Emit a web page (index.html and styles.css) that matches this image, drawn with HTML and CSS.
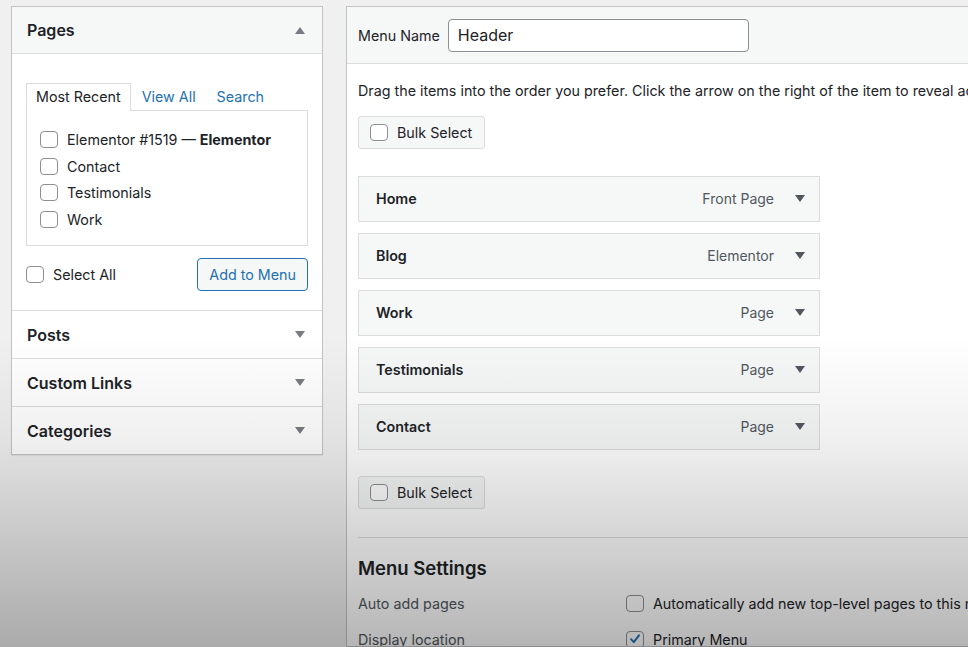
FILE: index.html
```html
<!DOCTYPE html>
<html>
<head>
<meta charset="utf-8">
<link rel="stylesheet" href="styles.css">
</head>
<body>
<div class="page">
  <div class="side">
    <div class="acc open">
      <div class="acc-head"><span>Pages</span><span class="tri up"></span></div>
      <div class="acc-body">
        <div class="tabs">
          <span class="tab active">Most Recent</span>
          <span class="tab link">View All</span>
          <span class="tab link">Search</span>
        </div>
        <div class="tab-panel">
          <label class="chk"><span class="box"></span><span>Elementor #1519 — <b>Elementor</b></span></label>
          <label class="chk"><span class="box"></span><span>Contact</span></label>
          <label class="chk"><span class="box"></span><span>Testimonials</span></label>
          <label class="chk"><span class="box"></span><span>Work</span></label>
        </div>
        <div class="acc-actions">
          <label class="chk"><span class="box"></span><span>Select All</span></label>
          <button class="btn-secondary">Add to Menu</button>
        </div>
      </div>
    </div>
    <div class="acc"><div class="acc-head"><span>Posts</span><span class="tri"></span></div></div>
    <div class="acc"><div class="acc-head"><span>Custom Links</span><span class="tri"></span></div></div>
    <div class="acc"><div class="acc-head"><span>Categories</span><span class="tri"></span></div></div>
  </div>

  <div class="main">
    <div class="main-head">
      <span class="label">Menu Name</span>
      <div class="input">Header</div>
    </div>
    <div class="main-body">
      <p class="hint">Drag the items into the order you prefer. Click the arrow on the right of the item to reveal additional configuration options.</p>
      <button class="bulk"><span class="box"></span>Bulk Select</button>
      <div class="items">
        <div class="item"><b>Home</b><span class="type">Front Page</span><span class="tri dark"></span></div>
        <div class="item"><b>Blog</b><span class="type">Elementor</span><span class="tri dark"></span></div>
        <div class="item"><b>Work</b><span class="type">Page</span><span class="tri dark"></span></div>
        <div class="item"><b>Testimonials</b><span class="type">Page</span><span class="tri dark"></span></div>
        <div class="item"><b>Contact</b><span class="type">Page</span><span class="tri dark"></span></div>
      </div>
      <button class="bulk"><span class="box"></span>Bulk Select</button>
      <hr class="divider">
      <h3 class="settings-title">Menu Settings</h3>
      <div class="setting">
        <span class="set-label">Auto add pages</span>
        <label class="chk"><span class="box"></span><span>Automatically add new top-level pages to this menu</span></label>
      </div>
      <div class="setting second">
        <span class="set-label">Display location</span>
        <label class="chk"><span class="box checked"><svg viewBox="0 0 16 16" width="14" height="14"><path d="M3.5 8.2 L6.6 11.5 L12.6 3.8" fill="none" stroke="#2271b1" stroke-width="2.2" stroke-linecap="round" stroke-linejoin="round"/></svg></span><span>Primary Menu</span></label>
      </div>
    </div>
  </div>
</div>
<div class="shade"></div>
</body>
</html>
```
FILE: styles.css
```css
* { box-sizing: border-box; }
html, body { margin: 0; height: 100%; }
body {
  background: #f0f0f1;
  font-family: "Inter", "Liberation Sans", sans-serif;
  color: #1d2327;
  font-size: 14.3px;
  overflow: hidden;
  position: relative;
}
.page {
  display: flex;
  align-items: flex-start;
  gap: 23px;
  padding: 6px 0 0 11px;
  height: 100%;
}
.side {
  width: 312px;
  flex: none;
  background: #fff;
  border: 1px solid #c3c4c7;
  box-shadow: 0 1px 1px rgba(0,0,0,.06);
}
.acc + .acc { border-top: 1px solid #dcdcde; }
.acc-head {
  height: 47px;
  display: flex;
  align-items: center;
  justify-content: space-between;
  padding: 0 17px 0 15px;
  font-weight: 600;
  font-size: 16px;
  background: #fff;
}
.acc.open .acc-head {
  background: #f6f7f7;
  border-bottom: 1px solid #dcdcde;
  height: 47px;
}
.tri {
  width: 0; height: 0;
  border-left: 5px solid transparent;
  border-right: 5px solid transparent;
  border-top: 7px solid #787c82;
}
.tri.up { border-top: 0; border-bottom: 7px solid #787c82; }
.tri.dark { border-top-color: #50575e; }
.acc-body { padding: 28px 14px 19px 14px; }
.tabs { display: flex; align-items: flex-end; height: 28px; }
.tab { padding: 0 9px; line-height: 26px; }
.tab.active {
  border: 1px solid #dcdcde;
  border-bottom: 0;
  background: #fff;
  height: 28px;
  line-height: 26px;
  position: relative;
  top: 1px;
}
.tab.link { color: #2271b1; padding: 0 10px 0 11px; }
.tab-panel {
  border: 1px solid #dcdcde;
  height: 136px;
  padding: 20px 13px 0;
  display: flex;
  flex-direction: column;
  gap: 9.5px;
}
.chk { display: flex; align-items: center; gap: 9px; line-height: 17px; white-space: nowrap; }
.box {
  width: 18px; height: 17px;
  flex: none;
  border: 1px solid #8c8f94;
  border-radius: 4px;
  background: #fff;
  display: inline-flex;
  align-items: center;
  justify-content: center;
}
.acc-actions {
  display: flex;
  justify-content: space-between;
  align-items: center;
  margin-top: 12px;
}
.btn-secondary {
  font: inherit;
  color: #2271b1;
  background: #f6f7f7;
  border: 1px solid #2271b1;
  border-radius: 4px;
  height: 33px;
  padding: 0 11px;
}
.main {
  flex: 1;
  min-width: 0;
  background: #fff;
  border: 1px solid #c3c4c7;
  border-right: 0;
  align-self: stretch;
  overflow: hidden;
}
.main-head {
  height: 57px;
  background: #f6f7f7;
  border-bottom: 1px solid #dcdcde;
  display: flex;
  align-items: center;
  gap: 8px;
  padding: 0 11px;
}
.input {
  width: 301px;
  height: 33px;
  border: 1px solid #8c8f94;
  border-radius: 4px;
  background: #fff;
  padding: 0 9px;
  display: flex;
  align-items: center;
  font-size: 16px;
}
.main-body { padding: 0 0 0 11px; }
.hint { margin: 17px 0 0; white-space: nowrap; line-height: 20px; }
.bulk {
  font: inherit;
  color: #1d2327;
  display: flex;
  align-items: center;
  gap: 9px;
  height: 33px;
  padding: 0 12px 0 11px;
  background: #f6f7f7;
  border: 1px solid #dcdcde;
  border-radius: 3px;
  margin-top: 15px;
}
.items {
  width: 462px;
  display: flex;
  flex-direction: column;
  gap: 11px;
  margin: 27px 0 26px;
}
.item {
  height: 46px;
  flex: none;
  background: #f6f7f7;
  border: 1px solid #dcdcde;
  display: flex;
  align-items: center;
  padding: 0 14px 2px 17px;
}
.item b { font-weight: 600; flex: 1; }
.type { color: #50575e; margin-right: 21px; font-size: 14px; }
.items + .bulk { margin-top: 0; }
.divider { border: 0; border-top: 1px solid #dcdcde; margin: 28px 0 0; }
.settings-title { margin: 18px 0 0; font-size: 18.5px; font-weight: 600; line-height: 24px; }
.setting { display: flex; align-items: center; margin-top: 11px; height: 24px; white-space: nowrap; }
.setting.second { margin-top: 12px; }
.set-label { width: 268px; flex: none; color: #50575e; }
.shade {
  position: absolute;
  inset: 0;
  pointer-events: none;
  background: linear-gradient(to bottom, rgba(0,0,0,0) 0%, rgba(0,0,0,0) 52%, rgba(0,0,0,0.06) 68%, rgba(0,0,0,0.29) 100%);
}
```
